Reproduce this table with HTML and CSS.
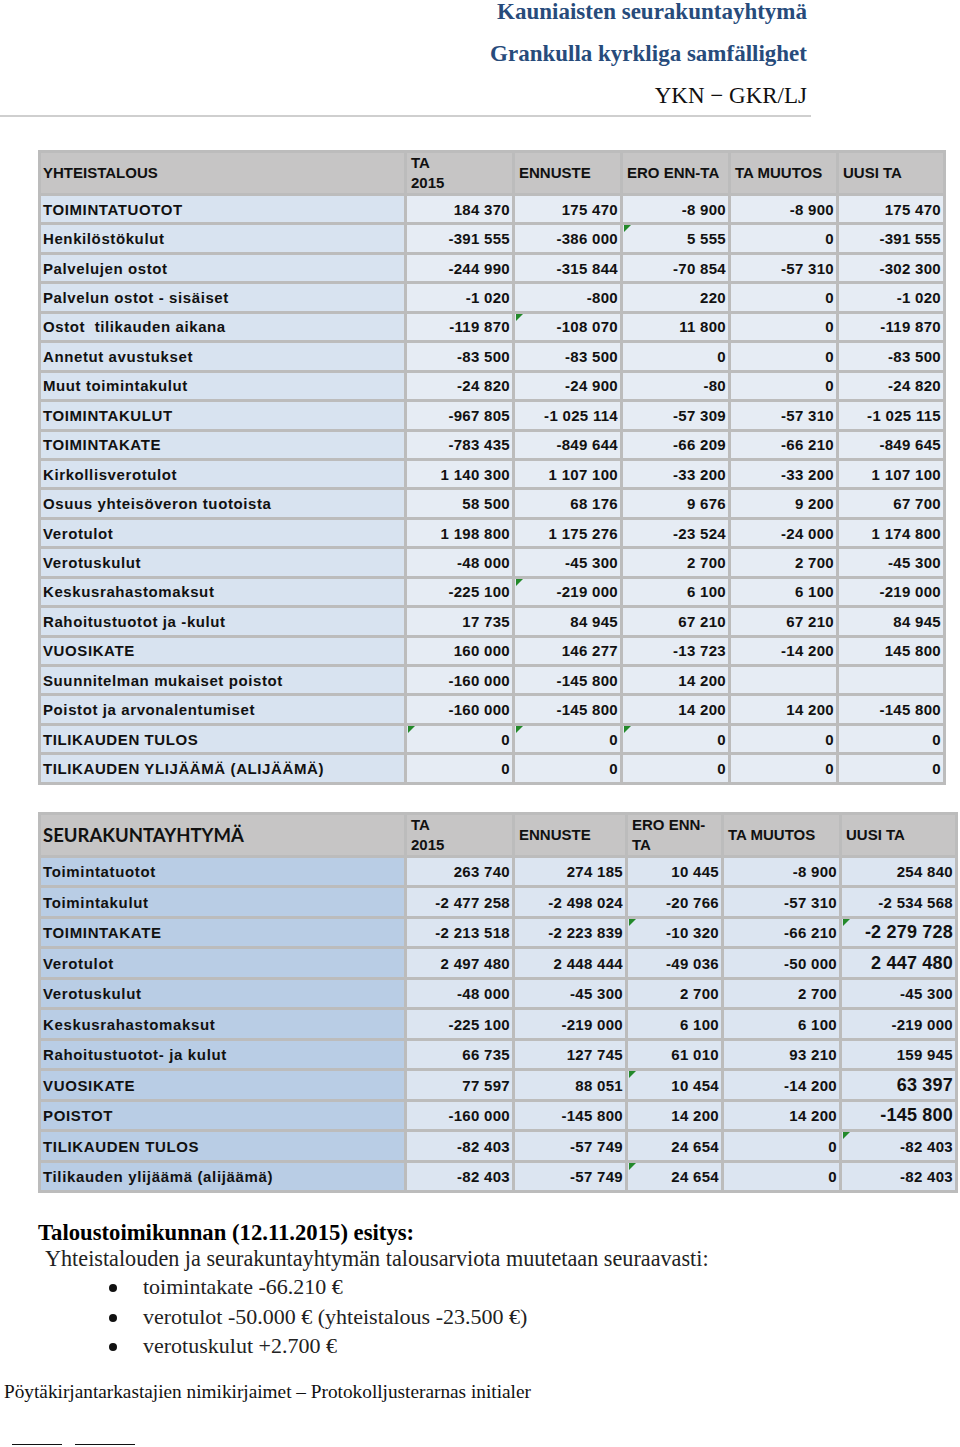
FILE: index.html
```html
<!DOCTYPE html>
<html lang="fi">
<head>
<meta charset="utf-8">
<title>Kauniaisten seurakuntayhtymä</title>
<link rel="stylesheet" href="styles.css">
</head>
<body>
<header class="doc-head">
  <div class="org">Kauniaisten seurakuntayhtymä</div>
  <div class="org">Grankulla kyrkliga samfällighet</div>
  <div class="code">YKN − GKR/LJ</div>
</header>
<div class="rule"></div>

<table class="fin t1">
  <colgroup><col class="c-label"><col class="c105"><col class="c105"><col class="c105"><col class="c105"><col class="c104"></colgroup>
  <thead>
    <tr><th>YHTEISTALOUS</th><th>TA<br>2015</th><th>ENNUSTE</th><th>ERO ENN-TA</th><th>TA MUUTOS</th><th>UUSI TA</th></tr>
  </thead>
  <tbody>
    <tr><td>TOIMINTATUOTOT</td><td>184 370</td><td>175 470</td><td>-8 900</td><td>-8 900</td><td>175 470</td></tr>
    <tr><td>Henkilöstökulut</td><td>-391 555</td><td>-386 000</td><td class="flag">5 555</td><td>0</td><td>-391 555</td></tr>
    <tr><td>Palvelujen ostot</td><td>-244 990</td><td>-315 844</td><td>-70 854</td><td>-57 310</td><td>-302 300</td></tr>
    <tr><td>Palvelun ostot - sisäiset</td><td>-1 020</td><td>-800</td><td>220</td><td>0</td><td>-1 020</td></tr>
    <tr><td>Ostot &nbsp;tilikauden aikana</td><td>-119 870</td><td class="flag">-108 070</td><td>11 800</td><td>0</td><td>-119 870</td></tr>
    <tr><td>Annetut avustukset</td><td>-83 500</td><td>-83 500</td><td>0</td><td>0</td><td>-83 500</td></tr>
    <tr><td>Muut toimintakulut</td><td>-24 820</td><td>-24 900</td><td>-80</td><td>0</td><td>-24 820</td></tr>
    <tr><td>TOIMINTAKULUT</td><td>-967 805</td><td>-1 025 114</td><td>-57 309</td><td>-57 310</td><td>-1 025 115</td></tr>
    <tr><td>TOIMINTAKATE</td><td>-783 435</td><td>-849 644</td><td>-66 209</td><td>-66 210</td><td>-849 645</td></tr>
    <tr><td>Kirkollisverotulot</td><td>1 140 300</td><td>1 107 100</td><td>-33 200</td><td>-33 200</td><td>1 107 100</td></tr>
    <tr><td>Osuus yhteisöveron tuotoista</td><td>58 500</td><td>68 176</td><td>9 676</td><td>9 200</td><td>67 700</td></tr>
    <tr><td>Verotulot</td><td>1 198 800</td><td>1 175 276</td><td>-23 524</td><td>-24 000</td><td>1 174 800</td></tr>
    <tr><td>Verotuskulut</td><td>-48 000</td><td>-45 300</td><td>2 700</td><td>2 700</td><td>-45 300</td></tr>
    <tr><td>Keskusrahastomaksut</td><td>-225 100</td><td class="flag">-219 000</td><td>6 100</td><td>6 100</td><td>-219 000</td></tr>
    <tr><td>Rahoitustuotot ja -kulut</td><td>17 735</td><td>84 945</td><td>67 210</td><td>67 210</td><td>84 945</td></tr>
    <tr><td>VUOSIKATE</td><td>160 000</td><td>146 277</td><td>-13 723</td><td>-14 200</td><td>145 800</td></tr>
    <tr><td>Suunnitelman mukaiset poistot</td><td>-160 000</td><td>-145 800</td><td>14 200</td><td></td><td></td></tr>
    <tr><td>Poistot ja arvonalentumiset</td><td>-160 000</td><td>-145 800</td><td>14 200</td><td>14 200</td><td>-145 800</td></tr>
    <tr><td>TILIKAUDEN TULOS</td><td class="flag">0</td><td class="flag">0</td><td class="flag">0</td><td>0</td><td>0</td></tr>
    <tr><td>TILIKAUDEN YLIJÄÄMÄ (ALIJÄÄMÄ)</td><td>0</td><td>0</td><td>0</td><td>0</td><td>0</td></tr>
  </tbody>
</table>

<table class="fin t2">
  <colgroup><col class="c-label"><col class="c105"><col class="c110"><col class="c93"><col class="c115"><col class="c113"></colgroup>
  <thead>
    <tr><th class="big-head">SEURAKUNTAYHTYMÄ</th><th>TA<br>2015</th><th>ENNUSTE</th><th>ERO ENN-<br>TA</th><th>TA MUUTOS</th><th>UUSI TA</th></tr>
  </thead>
  <tbody>
    <tr><td>Toimintatuotot</td><td>263 740</td><td>274 185</td><td>10 445</td><td>-8 900</td><td>254 840</td></tr>
    <tr><td>Toimintakulut</td><td>-2 477 258</td><td>-2 498 024</td><td>-20 766</td><td>-57 310</td><td>-2 534 568</td></tr>
    <tr><td>TOIMINTAKATE</td><td>-2 213 518</td><td>-2 223 839</td><td class="flag">-10 320</td><td>-66 210</td><td class="flag large">-2 279 728</td></tr>
    <tr><td>Verotulot</td><td>2 497 480</td><td>2 448 444</td><td>-49 036</td><td>-50 000</td><td class="large">2 447 480</td></tr>
    <tr><td>Verotuskulut</td><td>-48 000</td><td>-45 300</td><td>2 700</td><td>2 700</td><td>-45 300</td></tr>
    <tr><td>Keskusrahastomaksut</td><td>-225 100</td><td>-219 000</td><td>6 100</td><td>6 100</td><td>-219 000</td></tr>
    <tr><td>Rahoitustuotot- ja kulut</td><td>66 735</td><td>127 745</td><td>61 010</td><td>93 210</td><td>159 945</td></tr>
    <tr><td>VUOSIKATE</td><td>77 597</td><td>88 051</td><td class="flag">10 454</td><td>-14 200</td><td class="large">63 397</td></tr>
    <tr><td>POISTOT</td><td>-160 000</td><td>-145 800</td><td>14 200</td><td>14 200</td><td class="large">-145 800</td></tr>
    <tr><td>TILIKAUDEN TULOS</td><td>-82 403</td><td>-57 749</td><td>24 654</td><td>0</td><td class="flag">-82 403</td></tr>
    <tr><td>Tilikauden ylijäämä (alijäämä)</td><td>-82 403</td><td>-57 749</td><td class="flag">24 654</td><td>0</td><td>-82 403</td></tr>
  </tbody>
</table>

<section class="proposal">
  <h2 class="prop-title">Taloustoimikunnan (12.11.2015) esitys:</h2>
  <p class="prop-text">Yhteistalouden ja seurakuntayhtymän talousarviota muutetaan seuraavasti:</p>
  <ul class="prop-list">
    <li>toimintakate -66.210 €</li>
    <li>verotulot -50.000 € (yhteistalous -23.500 €)</li>
    <li>verotuskulut +2.700 €</li>
  </ul>
</section>

<footer class="doc-foot">
  <div class="initials">Pöytäkirjantarkastajien nimikirjaimet – Protokolljusterarnas initialer</div>
  <div class="sign-lines"><span class="sign s1"></span><span class="sign s2"></span></div>
</footer>
</body>
</html>
```

FILE: styles.css
```css
html, body {
  margin: 0;
  padding: 0;
  background: #ffffff;
}
body {
  width: 960px;
  height: 1447px;
  overflow: hidden;
  font-family: "Liberation Serif", "Times New Roman", serif;
  color: #000;
}

.doc-head {
  width: 807px;
  display: flex;
  flex-direction: column;
  align-items: flex-end;
  gap: 18px;
}
.doc-head .org,
.doc-head .code {
  line-height: 24px;
  font-size: 23px;
  white-space: nowrap;
}
.doc-head .org {
  font-weight: bold;
  color: #274b7b;
}
.doc-head .code {
  color: #111;
}

.rule {
  margin-top: 7px;
  width: 811px;
  height: 2px;
  background: #cfcfcf;
}

/* financial tables */
.fin {
  margin-left: 38px;
  border-collapse: separate;
  border-spacing: 3px;
  background: #bcbcbc;
  table-layout: fixed;
  font-family: "Liberation Sans", Arial, sans-serif;
  font-weight: bold;
  font-size: 15px;
  color: #111;
}
.t1 { margin-top: 33px; width: 908px; }
.t2 { margin-top: 27px; width: 920px; }

.c-label { width: 363px; }
.c105 { width: 105px; }
.c104 { width: 104px; }
.c110 { width: 110px; }
.c93 { width: 93px; }
.c115 { width: 115px; }
.c113 { width: 113px; }

.fin th {
  background: #c6c5c5;
  text-align: left;
  font-weight: bold;
  font-size: 15px;
  line-height: 20px;
  padding: 0 4px;
  vertical-align: middle;
  white-space: nowrap;
}
.fin th:first-child { padding-left: 2px; }
.t1 th { height: 39px; box-sizing: border-box; }
.t2 th { height: 40px; box-sizing: border-box; }

.fin td {
  padding: 0 2px 0 2px;
  text-align: right;
  vertical-align: middle;
  white-space: nowrap;
  letter-spacing: 0.3px;
  position: relative;
  box-sizing: border-box;
}
.fin td:first-child {
  text-align: left;
  letter-spacing: 0.6px;
}
.t1 td { height: 26.45px; background: #e6ecf4; }
.t1 td:first-child { background: #d8e3f0; }
.t2 td { height: 27.5px; background: #dce5f1; }
.t2 td:first-child { background: #b9cde5; letter-spacing: 0.65px; }

.t2 .big-head {
  font-family: Lato, "Open Sans", sans-serif;
  font-weight: bold;
  font-size: 18.5px;
  letter-spacing: 0;
}
.t2 td.large {
  font-weight: bold;
  font-size: 18px;
  letter-spacing: 0.2px;
}

.flag::before {
  content: "";
  position: absolute;
  top: 0;
  left: 1px;
  width: 0;
  height: 0;
  border-top: 7px solid #23892a;
  border-right: 7px solid transparent;
}

/* proposal */
.proposal {
  margin-top: 26px;
}
.prop-title {
  margin: 0 0 0 38px;
  font-size: 22.7px;
  line-height: 28px;
  font-weight: bold;
}
.prop-text {
  margin: 0 0 0 45px;
  font-size: 22.2px;
  line-height: 24px;
  color: #222;
}
.prop-list {
  margin: 1px 0 0 0;
  padding-left: 143px;
  font-size: 22px;
  line-height: 29.5px;
  color: #222;
  list-style: none;
}
.prop-list li {
  position: relative;
}
.prop-list li::before {
  content: "";
  position: absolute;
  left: -34px;
  top: 12px;
  width: 8px;
  height: 8px;
  border-radius: 50%;
  background: #111;
}

.doc-foot {
  margin-top: 19px;
}
.initials {
  margin-left: 4px;
  font-size: 19.3px;
  line-height: 24px;
  color: #111;
}
.sign-lines {
  margin-top: 40px;
  display: flex;
  gap: 13px;
  padding-left: 12px;
}
.sign {
  display: block;
  height: 1px;
  background: #111;
}
.s1 { width: 50px; }
.s2 { width: 60px; }
```
